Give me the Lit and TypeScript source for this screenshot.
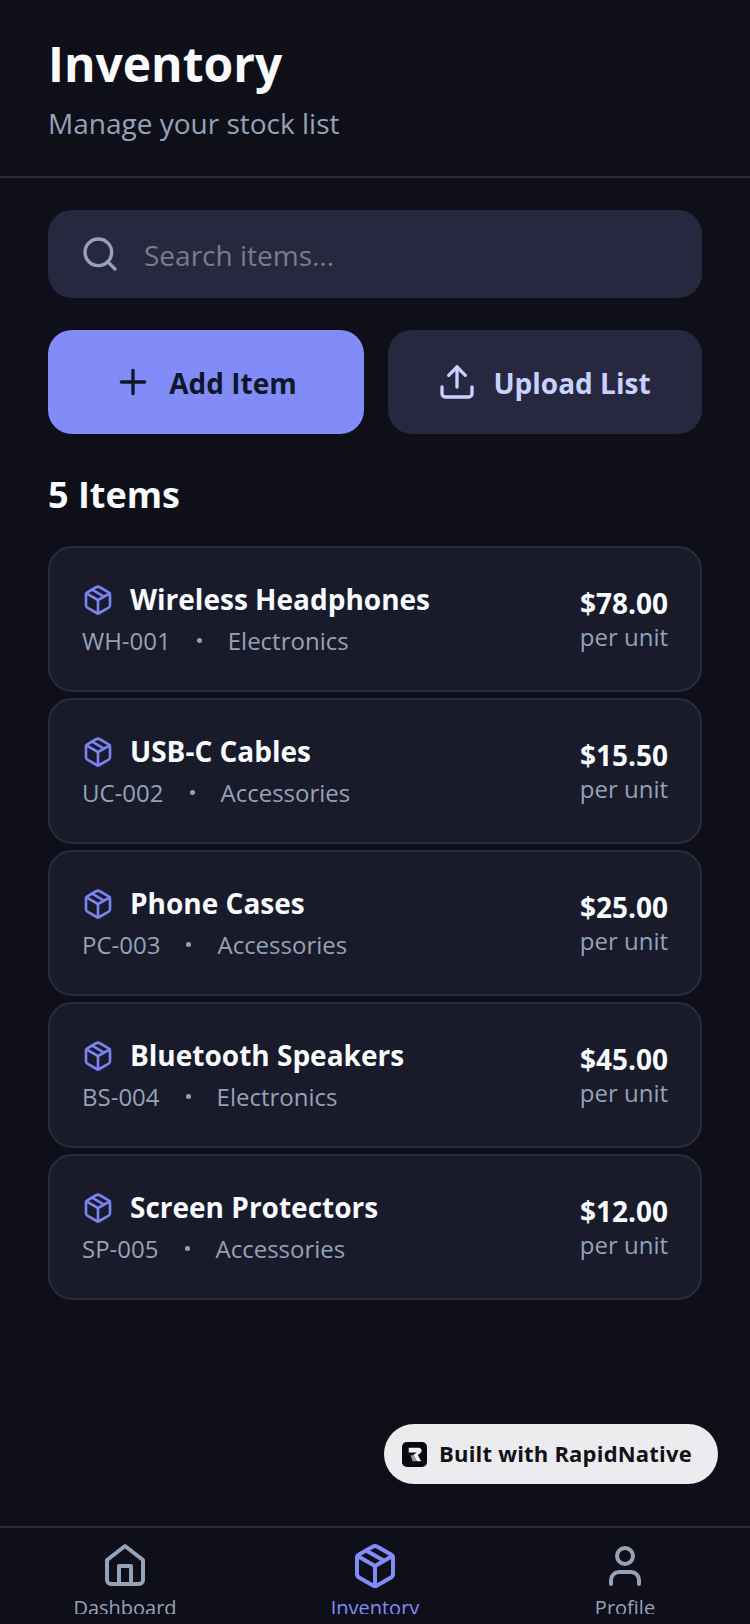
import { LitElement, html, css, svg } from 'lit';
import { customElement } from 'lit/decorators.js';

const box = svg`
  <path d="M11 21.73a2 2 0 0 0 2 0l7-4A2 2 0 0 0 21 16V8a2 2 0 0 0-1-1.73l-7-4a2 2 0 0 0-2 0l-7 4A2 2 0 0 0 3 8v8a2 2 0 0 0 1 1.73z"/>
  <path d="M12 22V12"/><polyline points="3.29 7 12 12 20.71 7"/><path d="m7.5 4.27 9 5.15"/>`;
const search = svg`<circle cx="11" cy="11" r="8"/><path d="m21 21-4.3-4.3"/>`;
const plus = svg`<path d="M5 12h14"/><path d="M12 5v14"/>`;
const upload = svg`<path d="M21 15v4a2 2 0 0 1-2 2H5a2 2 0 0 1-2-2v-4"/><polyline points="17 8 12 3 7 8"/><line x1="12" y1="3" x2="12" y2="15"/>`;
const house = svg`
  <path d="m3 9 9-7 9 7v10a2 2 0 0 1-2 2H5a2 2 0 0 1-2-2z"/>
  <polyline points="9 21 9 12 15 12 15 21"/>`;
const user = svg`<path d="M19 21v-2a4 4 0 0 0-4-4H9a4 4 0 0 0-4 4v2"/><circle cx="12" cy="7" r="4"/>`;

const icon = (body: unknown, size: number) => html`
  <svg width=${size} height=${size} viewBox="0 0 24 24" fill="none"
    stroke="currentColor" stroke-width="2" stroke-linecap="round" stroke-linejoin="round">${body}</svg>`;

const items = [
  { name: 'Wireless Headphones', sku: 'WH-001', cat: 'Electronics', price: '$78.00' },
  { name: 'USB-C Cables', sku: 'UC-002', cat: 'Accessories', price: '$15.50' },
  { name: 'Phone Cases', sku: 'PC-003', cat: 'Accessories', price: '$25.00' },
  { name: 'Bluetooth Speakers', sku: 'BS-004', cat: 'Electronics', price: '$45.00' },
  { name: 'Screen Protectors', sku: 'SP-005', cat: 'Accessories', price: '$12.00' },
];

const tabs = [
  { label: 'Dashboard', icon: house, active: false },
  { label: 'Inventory', icon: box, active: true },
  { label: 'Profile', icon: user, active: false },
];

@customElement('app-root')
export class AppRoot extends LitElement {
  static styles = css`
    :host {
      display: block;
      font-family: 'Open Sans', sans-serif;
    }
    .screen {
      position: relative;
      display: flex;
      flex-direction: column;
      height: 1624px;
      overflow: hidden;
      background: #0f0f1a;
      color: #f8fafc;
    }
    header {
      height: 178px;
      box-sizing: border-box;
      padding: 32px 0 0 48px;
      border-bottom: 2px solid #2a2a40;
    }
    h1 {
      margin: 0;
      font-size: 48px;
      line-height: 64px;
      font-weight: 700;
    }
    .sub {
      margin-top: 7px;
      font-size: 28px;
      line-height: 40px;
      color: #94a3b8;
    }
    main {
      flex: 1;
      padding: 32px 48px 0;
    }
    .search {
      display: flex;
      align-items: center;
      gap: 24px;
      height: 88px;
      padding: 0 32px;
      border-radius: 24px;
      background: #272840;
      color: #94a3b8;
    }
    .search span {
      margin-top: 2px;
      font-size: 28px;
      color: #7c7c85;
    }
    .actions {
      display: grid;
      grid-template-columns: 316px 1fr;
      gap: 24px;
      margin-top: 32px;
    }
    .btn {
      display: flex;
      align-items: center;
      justify-content: center;
      gap: 16px;
      height: 104px;
      padding-right: 2px;
      border-radius: 24px;
      font-size: 28px;
      font-weight: 700;
    }
    .btn span {
      margin-top: 2px;
    }
    .btn.primary {
      background: #818cf8;
      color: #0f172a;
    }
    .btn.secondary {
      background: #272840;
      color: #c7d2fe;
    }
    h2 {
      margin: 36px 0 0;
      font-size: 36px;
      line-height: 50px;
      font-weight: 700;
    }
    .list {
      display: flex;
      flex-direction: column;
      gap: 6px;
      margin-top: 26px;
    }
    .card {
      display: flex;
      align-items: center;
      justify-content: space-between;
      height: 146px;
      box-sizing: border-box;
      padding: 0 32px;
      border: 2px solid #2a2a40;
      border-radius: 24px;
      background: #191a2a;
    }
    .name {
      display: flex;
      align-items: center;
      gap: 16px;
      font-size: 28px;
      line-height: 38px;
      font-weight: 700;
    }
    .name svg {
      margin-top: 2px;
      color: #7a84f0;
    }
    .meta {
      display: flex;
      align-items: center;
      gap: 24px;
      margin-top: 5px;
      font-size: 24px;
      line-height: 36px;
      color: #94a3b8;
    }
    .meta i {
      width: 5px;
      height: 5px;
      margin: 0 2px;
      border-radius: 50%;
      background: #94a3b8;
    }
    .cost {
      text-align: right;
    }
    .price {
      font-size: 28px;
      line-height: 36px;
      font-weight: 700;
    }
    .unit {
      font-size: 24px;
      line-height: 32px;
      color: #94a3b8;
    }
    .badge {
      position: absolute;
      right: 32px;
      top: 1424px;
      display: flex;
      align-items: center;
      gap: 12px;
      height: 60px;
      width: 334px;
      padding: 0 0 2px 18px;
      box-sizing: border-box;
      border-radius: 30px;
      background: #ececee;
      color: #111118;
      font-size: 22px;
      letter-spacing: 0.2px;
      font-weight: 700;
      white-space: nowrap;
    }
    .logo {
      display: block;
      margin-top: 2px;
    }
    nav {
      height: 98px;
      box-sizing: border-box;
      border-top: 2px solid #2a2a40;
    }
    .tabs {
      display: flex;
      height: 86px;
      overflow: hidden;
    }
    .tab {
      flex: 1;
      display: flex;
      flex-direction: column;
      align-items: center;
      padding-top: 14px;
      color: #94a3b8;
      font-size: 20px;
      line-height: 28px;
    }
    .tab.active {
      color: #818cf8;
    }
    .tab svg,
    .tab span {
      flex-shrink: 0;
    }
    .tab span {
      margin-top: 4px;
    }
  `;

  render() {
    return html`
      <div class="screen">
        <header>
          <h1>Inventory</h1>
          <div class="sub">Manage your stock list</div>
        </header>
        <main>
          <div class="search">${icon(search, 40)}<span>Search items...</span></div>
          <div class="actions">
            <div class="btn primary">${icon(plus, 40)}<span>Add Item</span></div>
            <div class="btn secondary">${icon(upload, 40)}<span>Upload List</span></div>
          </div>
          <h2>5 Items</h2>
          <div class="list">
            ${items.map(it => html`
              <div class="card">
                <div>
                  <div class="name">${icon(box, 32)}${it.name}</div>
                  <div class="meta"><span>${it.sku}</span><i></i><span>${it.cat}</span></div>
                </div>
                <div class="cost">
                  <div class="price">${it.price}</div>
                  <div class="unit">per unit</div>
                </div>
              </div>
            `)}
          </div>
        </main>
        <div class="badge">
          <svg class="logo" width="25" height="25" viewBox="0 0 26 26">
            <rect width="26" height="26" rx="5" fill="#0b0b0f"/>
            <path d="M7 6h10.5a3 3 0 0 1 2 5.2L16.4 13.4 20 20h-4.6l-3.6-6.4 3.6-2.8H7z" fill="#f4f4f6"/>
            <path d="M9 14l3.4-.4L15 20h-4z" fill="#9a9a9f"/>
          </svg>
          <span>Built with RapidNative</span>
        </div>
        <nav>
          <div class="tabs">
            ${tabs.map(t => html`
              <div class="tab ${t.active ? 'active' : ''}">
                ${icon(t.icon, 48)}
                <span>${t.label}</span>
              </div>
            `)}
          </div>
        </nav>
      </div>
    `;
  }
}
